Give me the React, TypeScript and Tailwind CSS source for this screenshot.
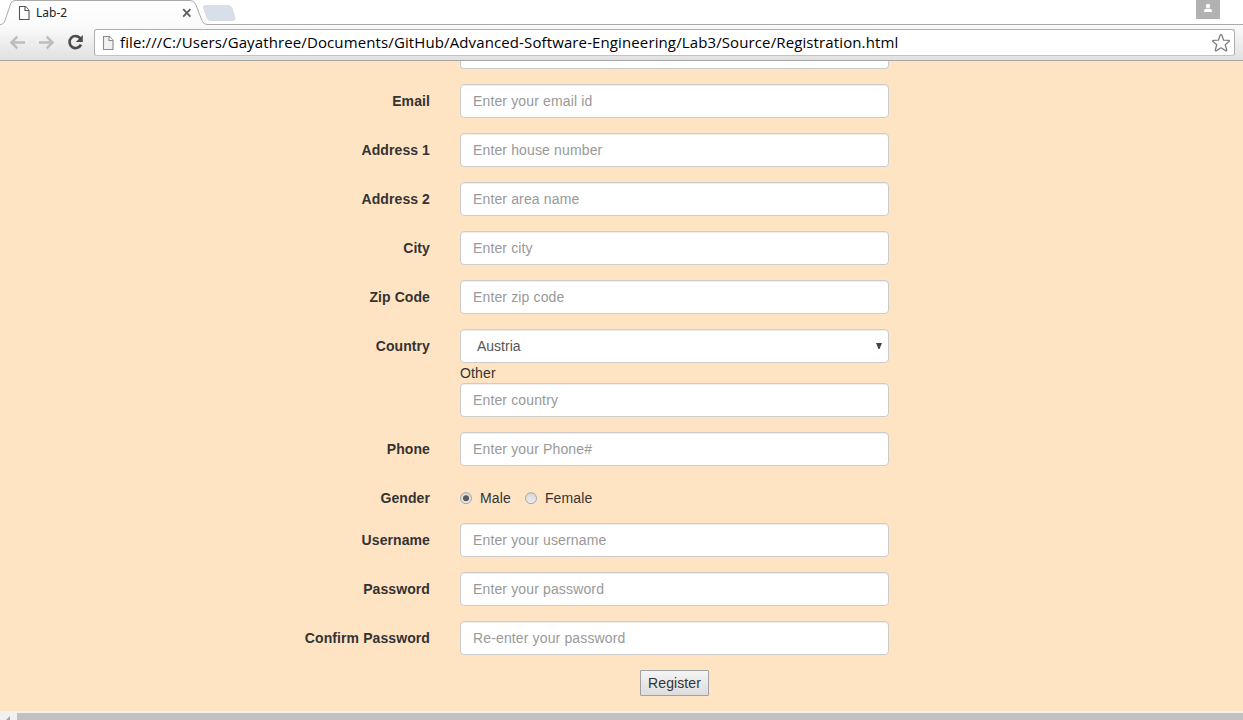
import React from 'react';

const inputClass =
  "block h-[34px] w-full rounded border border-[#ccc] bg-white px-3 font-['Liberation_Sans',Arial,sans-serif] text-sm leading-5 tracking-[0.14px] text-[#555] shadow-[inset_0_1px_1px_rgba(0,0,0,0.075)] outline-none placeholder:text-[#999]";

function Row({ label, children }: { label: string; children: React.ReactNode }) {
  return (
    <div className="mb-[15px] flex">
      <label className="w-[430px] shrink-0 pt-[7px] text-right font-bold tracking-[0.09px]">{label}</label>
      <div className="ml-[30px] w-[429px]">{children}</div>
    </div>
  );
}

function Field({ label, hint, type = 'text' }: { label: string; hint: string; type?: string }) {
  return (
    <Row label={label}>
      <input type={type} placeholder={hint} className={inputClass} />
    </Row>
  );
}

function PageIcon({ stroke, fill, className }: { stroke: string; fill: string; className: string }) {
  return (
    <svg width="12" height="16" viewBox="0 0 12 16" className={className} fill={fill} stroke={stroke} strokeWidth="1.100">
      <path d="M1.500 1.500h6l3.500 4v9h-9.500z" />
      <path d="M7 1.500v4h4" fill="#fff" />
    </svg>
  );
}

function TabStrip() {
  return (
    <div className="relative h-[25px] bg-white">
      <svg width="1243" height="25" viewBox="0 0 1243 25" className="absolute inset-0">
        <defs>
          <linearGradient id="tab" x1="0" y1="0" x2="0" y2="1">
            <stop offset="0" stopColor="#fff" />
            <stop offset="1" stopColor="#fbfbfb" />
          </linearGradient>
        </defs>
        <path d="M0 24.500C3 24.500 4 23 5 20.500L10.500 4Q11.800 .5 15 .5H190Q194 .5 195.500 4L202 20.500Q203.500 24.500 207 24.500H1243V26H0z" fill="url(#tab)" />
        <path d="M0 24.500C3 24.500 4 23 5 20.500L10.500 4Q11.800 .5 15 .5H190Q194 .5 195.500 4L202 20.500Q203.500 24.500 207 24.500H1243" fill="none" stroke="#aaaaaa" />
        <path d="M206 5.500H228Q231 5.500 232 8L235 18Q235.500 20.500 233 20.500H211Q208 20.500 207 18L203.500 8Q203 5.500 206 5.500z" fill="#d9dfe8" stroke="#d3d8df" strokeWidth=".8" />
        <path d="M183.200 9.200l7.200 7.400M190.400 9.200l-7.200 7.400" stroke="#5c5c5c" strokeWidth="1.800" />
      </svg>
      <div className="relative flex h-[25px] items-center pl-[18px]">
        <PageIcon stroke="#555" fill="#fff" className="mt-px" />
        <span className="ml-1.5 font-['Noto_Sans','Open_Sans',sans-serif] text-[12px] leading-4 text-[#222]">Lab-2</span>
      </div>
      <div className="absolute left-[1196px] top-0 flex h-[19px] w-6 justify-center bg-[#b2b2b2]">
        <svg width="10" height="10" viewBox="0 0 10 10" className="mt-[3px]" fill="#fff">
          <circle cx="5" cy="2.900" r="2.200" />
          <path d="M1 9V7.500Q1 5.800 3.500 5.800h3Q9 5.800 9 7.500V9z" />
        </svg>
      </div>
    </div>
  );
}

function Toolbar() {
  return (
    <div className="flex h-9 items-start border-b border-[#a5a5a5] bg-linear-to-b from-[#fbfbfb] to-[#e1e1e1]">
      <svg width="94" height="35" viewBox="0 0 94 35" className="shrink-0" fill="none">
        <path d="M25 17.500H11.500M17.300 11.700l-5.800 5.800 5.800 5.800" stroke="#bdbdbd" strokeWidth="2.500" />
        <path d="M39 17.500H52.500M46.700 11.700l5.800 5.800-5.800 5.800" stroke="#bdbdbd" strokeWidth="2.500" />
        <path d="M80.300 13.400A6 6 0 1 0 81 19.600" stroke="#4c4c4c" strokeWidth="2.600" />
        <path d="M82.800 10v7h-7z" fill="#4c4c4c" />
      </svg>
      <div className="mt-1 flex h-[27px] w-[1141px] items-center rounded-[3px] border border-[#adadad] border-b-[#c3c3c3] bg-white">
        <PageIcon stroke="#8b8b8b" fill="#f1f1f1" className="ml-[7px] shrink-0" />
        <span className="-mt-0.5 ml-1.5 grow whitespace-nowrap font-['Open_Sans','Noto_Sans',sans-serif] text-[15px] leading-6 tracking-[0.117px] text-black">
          file:///C:/Users/Gayathree/Documents/GitHub/Advanced-Software-Engineering/Lab3/Source/Registration.html
        </span>
        <svg width="20" height="20" viewBox="0 0 20 20" className="mr-[3px] shrink-0" fill="#fff" stroke="#808080" strokeWidth="1.300" strokeLinejoin="round">
          <path d="M10 1.700Q10.700 1.700 11 2.500L12.600 7.200L17.600 7.300Q19 7.500 18 8.600L14.200 11.700L15.700 16.700Q15.800 18.200 14.500 17.600L10 14.800L5.500 17.600Q4.200 18.200 4.300 16.700L5.800 11.700L2 8.600Q1 7.500 2.400 7.300L7.400 7.200L9 2.500Q9.300 1.700 10 1.700z" />
        </svg>
      </div>
    </div>
  );
}

function Radio({ label, checked = false }: { label: string; checked?: boolean }) {
  return (
    <label className="flex items-center tracking-[0.14px]">
      <svg width="13" height="13" viewBox="0 0 13 13" className="mr-[7px]">
        <defs>
          <linearGradient id="radio" x1="0" y1="0" x2="0" y2="1">
            <stop offset="0" stopColor="#d8d8d8" />
            <stop offset="1" stopColor="#ececec" />
          </linearGradient>
        </defs>
        <circle cx="6" cy="6.200" r="5.500" fill="url(#radio)" stroke="#a6a6a6" />
        {checked && <circle cx="6" cy="6.200" r="3" fill="#5b5b5b" />}
      </svg>
      {label}
    </label>
  );
}

export default function App() {
  return (
    <div className="flex h-[720px] w-[1243px] flex-col overflow-hidden bg-[#ffe4c4] font-['Liberation_Sans',Arial,sans-serif] text-sm leading-5 text-[#333]">
      <TabStrip />
      <Toolbar />
      <form className="h-[650px] shrink-0 overflow-hidden" onSubmit={(e) => e.preventDefault()}>
        <div className="mb-[15px] ml-[460px] h-2 w-[429px] rounded-b border border-t-0 border-[#ccc] bg-white" />
        <Field label="Email" hint="Enter your email id" />
        <Field label="Address 1" hint="Enter house number" />
        <Field label="Address 2" hint="Enter area name" />
        <Field label="City" hint="Enter city" />
        <Field label="Zip Code" hint="Enter zip code" />
        <Row label="Country">
          <button type="button" className={inputClass + ' flex! items-center justify-between pl-4! pr-[5px]!'}>
            <span className="tracking-normal">Austria</span>
            <svg width="8" height="6" viewBox="0 0 8 6" fill="#444">
              <path d="M1 0h6L4.500 6h-1z" />
            </svg>
          </button>
          <div className="tracking-[0.14px]">Other</div>
          <input placeholder="Enter country" className={inputClass} />
        </Row>
        <Field label="Phone" hint="Enter your Phone#" />
        <Row label="Gender">
          <div className="flex gap-3.5 pt-[7px]">
            <Radio label="Male" checked />
            <Radio label="Female" />
          </div>
        </Row>
        <Field label="Username" hint="Enter your username" />
        <Field label="Password" hint="Enter your password" type="password" />
        <Field label="Confirm Password" hint="Re-enter your password" type="password" />
        <button className="ml-[640px] block h-[26px] w-[69px] rounded-[1px] border border-[#a0a0a5] bg-linear-to-b from-[#f4f4f4] to-[#dddddd] text-center tracking-[0.1px] text-[#333]">
          Register
        </button>
      </form>
      <div className="flex h-[9px] shrink-0 bg-[#f1f1f1]">
        <svg width="17" height="9" viewBox="0 0 17 9" className="shrink-0">
          <path d="M10 5v8L6 9z" fill="#a3a3a3" />
        </svg>
        <div className="mt-0.5 grow bg-[#c1c1c1]" />
      </div>
    </div>
  );
}
